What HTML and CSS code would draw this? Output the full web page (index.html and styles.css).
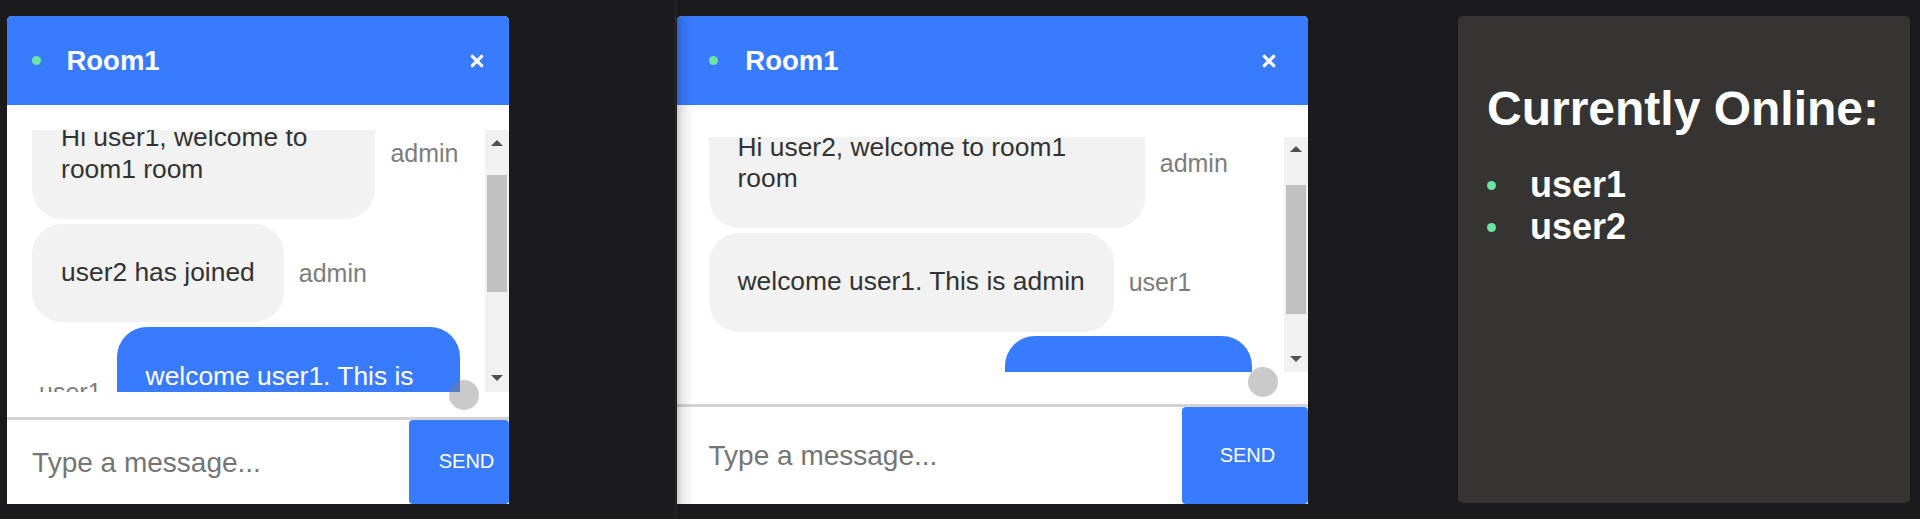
FILE: index.html
```html
<!DOCTYPE html>
<html lang="en">
<head>
<meta charset="utf-8">
<title>Chat rooms</title>
<link rel="stylesheet" href="styles.css">
</head>
<body>
<main class="app">
  <div class="col col--left">
    <section class="chat chat--a">
      <header class="chat-head">
        <span class="status-dot"></span>
        <h2 class="chat-title">Room1</h2>
        <button class="chat-close" type="button" aria-label="Close">
          <svg viewBox="0 0 14 14" width="14" height="14"><path d="M2.3 2.3L11.7 11.7M11.7 2.3L2.3 11.7"/></svg>
        </button>
      </header>
      <div class="chat-body">
        <div class="viewport">
          <div class="msg-list">
            <div class="msg"><p class="bubble">Hi user1, welcome to room1 room</p><span class="sender">admin</span></div>
            <div class="msg"><p class="bubble">user2 has joined</p><span class="sender">admin</span></div>
            <div class="msg msg--own"><span class="sender">user1</span><p class="bubble">welcome user1. This is admin</p></div>
          </div>
        </div>
        <div class="scrollbar">
          <span class="sb-btn sb-btn--up"></span>
          <div class="sb-track"><span class="sb-thumb"></span></div>
          <span class="sb-btn sb-btn--down"></span>
        </div>
        <span class="jump"></span>
      </div>
      <form class="composer">
        <input class="composer-input" type="text" placeholder="Type a message...">
        <button class="composer-send" type="button">SEND</button>
      </form>
    </section>
  </div>

  <div class="col col--mid">
    <section class="chat chat--b">
      <header class="chat-head">
        <span class="status-dot"></span>
        <h2 class="chat-title">Room1</h2>
        <button class="chat-close" type="button" aria-label="Close">
          <svg viewBox="0 0 14 14" width="14" height="14"><path d="M2.3 2.3L11.7 11.7M11.7 2.3L2.3 11.7"/></svg>
        </button>
      </header>
      <div class="chat-body">
        <div class="viewport">
          <div class="msg-list">
            <div class="msg"><p class="bubble">Hi user2, welcome to room1 room</p><span class="sender">admin</span></div>
            <div class="msg"><p class="bubble">welcome user1. This is admin</p><span class="sender">user1</span></div>
            <div class="msg msg--own"><span class="sender">user2</span><p class="bubble">great, thank you</p></div>
          </div>
        </div>
        <div class="scrollbar">
          <span class="sb-btn sb-btn--up"></span>
          <div class="sb-track"><span class="sb-thumb"></span></div>
          <span class="sb-btn sb-btn--down"></span>
        </div>
        <span class="jump"></span>
      </div>
      <form class="composer">
        <input class="composer-input" type="text" placeholder="Type a message...">
        <button class="composer-send" type="button">SEND</button>
      </form>
    </section>
  </div>

  <aside class="online">
    <h1 class="online-title">Currently Online:</h1>
    <ul class="online-list">
      <li>user1</li>
      <li>user2</li>
    </ul>
  </aside>
</main>
</body>
</html>
```

FILE: styles.css
```css
* { box-sizing: border-box; }

html, body {
  margin: 0;
  height: 100%;
}

body {
  background: #1b1b1d;
  font-family: "Liberation Sans", Arial, Helvetica, sans-serif;
  overflow: hidden;
}

.app {
  display: flex;
  height: 519px;
}

.col {
  padding-top: 16px;
}

.col--left {
  width: 675px;
  padding-left: 7px;
}

.col--mid {
  width: 783px;
  border-left: 1px solid #2c2c2f;
  padding-left: 1px;
}

/* ---------- chat window ---------- */
.chat {
  height: 488px;
  display: flex;
  flex-direction: column;
  background: #fff;
  border-radius: 5px 5px 0 0;
  overflow: hidden;
  container-type: inline-size;
  position: relative;
}

.chat--a { width: 502px; }
.chat--b { width: 631px; }

.chat--b::after {
  content: "";
  position: absolute;
  left: 0;
  top: 0;
  bottom: 0;
  width: 17px;
  background: linear-gradient(to right, rgba(0,0,0,0.2), rgba(0,0,0,0.08) 6px, rgba(0,0,0,0));
  pointer-events: none;
}

.chat-head {
  height: 89px;
  flex-shrink: 0;
  display: flex;
  align-items: center;
  padding: 0 5cqw;
  background: #397bfe;
  color: #fff;
}

.status-dot {
  width: 9px;
  height: 9px;
  border-radius: 50%;
  background: #6fe3a0;
  flex-shrink: 0;
}

.chat-title {
  margin: 0 0 0 calc(16px + 1.86cqw);
  font-size: 27.5px;
  font-weight: bold;
}

.chat-close {
  margin-left: auto;
  padding: 0;
  border: 0;
  background: none;
  display: flex;
}

.chat-close path {
  stroke: #fff;
  stroke-width: 3.2;
  stroke-linecap: round;
  fill: none;
}

/* ---------- messages ---------- */
.chat-body {
  flex: 1;
  min-height: 0;
  position: relative;
  display: flex;
  padding: 5cqw 0 5cqw 5cqw;
}

.viewport {
  flex: 1;
  min-width: 0;
  overflow: hidden;
}

.msg-list {
  display: flex;
  flex-direction: column;
  gap: 4.7px;
}

.chat--a .msg-list { margin-top: -41.3px; }
.chat--b .msg-list { margin-top: -38.6px; }

.msg {
  display: flex;
  align-items: center;
  gap: 15px;
}

.msg--own {
  justify-content: flex-end;
}

.bubble {
  margin: 0;
  max-width: 75.8%;
  padding: 33.55px 29px;
  border-radius: 30px;
  background: #f2f2f2;
  color: #333;
  font-size: 26.4px;
  line-height: 31.6px;
}

.msg--own .bubble {
  background: #397bfe;
  color: #fff;
  margin-right: 5cqw;
}

.sender {
  flex-shrink: 0;
  font-size: 25px;
  color: #7d7d7d;
}

/* ---------- scrollbar ---------- */
.scrollbar {
  width: 24px;
  flex-shrink: 0;
  display: flex;
  flex-direction: column;
  background: #f1f1f1;
}

.sb-btn {
  display: flex;
  align-items: center;
  justify-content: center;
  height: 25px;
}

.sb-btn--down { height: 27px; }

.sb-btn::before {
  content: "";
  border-left: 6px solid transparent;
  border-right: 6px solid transparent;
}

.sb-btn--up::before { border-bottom: 6px solid #505050; }
.sb-btn--down::before { border-top: 6px solid #505050; }

.sb-track {
  flex: 1;
  padding: 0 2px;
}

.sb-thumb {
  display: block;
  background: #c1c1c1;
}

.chat--a .sb-thumb { margin-top: 20px; height: 116.7px; }
.chat--b .sb-thumb { margin-top: 23px; height: 129.3px; }

.jump {
  position: absolute;
  right: 30px;
  bottom: 7px;
  width: 30px;
  height: 30px;
  border-radius: 50%;
  background: rgba(128, 128, 128, 0.42);
}

/* ---------- composer ---------- */
.composer {
  margin: 0;
  flex-shrink: 0;
  display: flex;
  border-top: 3px solid #d3d3d3;
}

.composer-input {
  flex: 1;
  min-width: 0;
  height: calc(10cqw + 34px);
  margin: 0;
  border: 0;
  outline: 0;
  padding: 2px 5cqw 0;
  background: #fff;
  color: #333;
  font-family: "Liberation Sans", Arial, Helvetica, sans-serif;
  font-size: 28px;
}

.composer-input::placeholder {
  color: #757575;
}

.composer-send {
  width: 20cqw;
  flex-shrink: 0;
  margin: 0;
  border: 0;
  border-radius: 4px;
  padding: 0 6cqw;
  background: #397bfe;
  color: #fff;
  font-family: "Liberation Sans", Arial, Helvetica, sans-serif;
  font-size: 20px;
  text-align: left;
  white-space: nowrap;
  overflow: visible;
}

/* ---------- online panel ---------- */
.online {
  width: 452px;
  height: 487px;
  margin-top: 16px;
  padding: 0 29px;
  background: #353432;
  border-radius: 5px;
  color: #fff;
}

.online-title {
  margin: 65px 0 0;
  font-size: 48px;
  line-height: 55px;
  font-weight: bold;
}

.online-list {
  list-style: none;
  margin: 27.8px 0 0;
  padding: 0;
}

.online-list li {
  display: flex;
  align-items: center;
  gap: 34px;
  font-size: 36px;
  line-height: 42px;
  font-weight: bold;
}

.online-list li::before {
  content: "";
  width: 9px;
  height: 9px;
  margin-top: 2px;
  border-radius: 50%;
  background: #6fe3a0;
  flex-shrink: 0;
}
```
